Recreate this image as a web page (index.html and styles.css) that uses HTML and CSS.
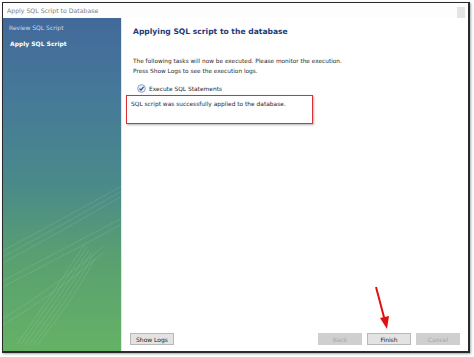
FILE: index.html
```html
<!DOCTYPE html>
<html lang="en">

<head>
  <meta charset="UTF-8">
  <meta name="viewport" content="width=device-width, initial-scale=1.0">
  <title>Apply SQL Script to Database</title>
  <link rel="stylesheet" href="styles.css">
</head>

<body>
  <div class="window">
    <div class="titlebar">
      <span class="title">Apply SQL Script to Database</span>
      <span class="title-box"></span>
    </div>
    <div class="body">
      <div class="sidebar">
        <div class="step">Review SQL Script</div>
        <div class="step active">Apply SQL Script</div>
        <svg class="swoosh" viewBox="0 0 118 332" preserveAspectRatio="none">
          <g fill="none" stroke="#ffffff" stroke-width="0.8" stroke-opacity="0.13">
            <path d="M0 232 Q60 200 118 168" />
            <path d="M0 238 Q60 206 118 173" />
            <path d="M0 244 Q60 212 118 178" />
            <path d="M0 262 Q70 225 118 200" />
            <path d="M0 268 Q70 232 118 206" />
            <path d="M0 300 Q60 262 100 228" />
            <path d="M0 306 Q60 270 100 234" />
            <path d="M14 325 Q50 275 82 225" />
            <path d="M18 325 Q54 276 84 228" />
            <path d="M22 325 Q58 277 86 231" />
            <path d="M26 326 Q62 278 88 234" />
            <path d="M30 326 Q66 280 90 237" />
            <path d="M34 326 Q70 282 92 240" />
          </g>
        </svg>
      </div>
      <div class="content">
        <h1 class="heading">Applying SQL script to the database</h1>
        <p class="intro">The following tasks will now be executed. Please monitor the execution.<br>Press Show Logs to see the execution logs.</p>
        <div class="task">
          <svg class="check" viewBox="0 0 10 10" width="9" height="9">
            <circle cx="5" cy="5" r="4.3" fill="#e8eef8" stroke="#6b86b8" stroke-width="0.8" />
            <path d="M2.8 5.1 L4.4 6.7 L7.3 3.2" fill="none" stroke="#27457e" stroke-width="1.3" />
          </svg>
          <span>Execute SQL Statements</span>
        </div>
        <div class="message">SQL script was successfully applied to the database.</div>
        <div class="buttons">
          <button class="btn">Show Logs</button>
          <div class="spacer"></div>
          <button class="btn disabled">Back</button>
          <button class="btn">Finish</button>
          <button class="btn disabled">Cancel</button>
        </div>
      </div>
    </div>
    <svg class="arrow" width="24" height="48" viewBox="0 0 24 48">
      <path d="M3 2 L12 36" stroke="#e01010" stroke-width="2" fill="none" />
      <path d="M7 33 L14 44 L16 31 Z" fill="#e01010" />
    </svg>
  </div>
</body>

</html>
```

FILE: styles.css
```css
* {
  margin: 0;
  padding: 0;
  box-sizing: border-box;
  font-family: 'DejaVu Sans', 'Liberation Sans', sans-serif;
}

body {
  width: 474px;
  height: 357px;
  background: #fff;
  overflow: hidden;
}

.window {
  position: relative;
  margin: 2px 0 0 2px;
  width: 468px;
  height: 351px;
  border: 1px solid #2a2a2a;
  border-right-width: 2px;
  border-bottom-width: 2px;
  box-shadow: 1px 1px 2px rgba(0, 0, 0, 0.35);
  display: flex;
  flex-direction: column;
  background: #fff;
}

.titlebar {
  height: 15px;
  display: flex;
  align-items: center;
  padding: 0 3px 0 4px;
  background: #fdfdfd;
}

.title {
  font-size: 6.2px;
  color: #7d7d7d;
}

.title-box {
  margin-left: auto;
  margin-top: 4px;
  width: 8px;
  height: 11px;
  background: #e4e4e4;
}

.body {
  flex: 1;
  display: flex;
}

.sidebar {
  position: relative;
  width: 118px;
  padding: 4px 0 0 6px;
  background: linear-gradient(180deg, #42699a 0%, #467a98 25%, #4a8a8a 50%, #58a070 72%, #65b266 100%);
  overflow: hidden;
}

.step {
  font-size: 6px;
  color: #c9dcee;
  height: 12px;
  line-height: 12px;
}

.step.active {
  margin-top: 4px;
  padding-left: 1px;
  color: #fff;
  font-weight: bold;
}

.swoosh {
  position: absolute;
  left: 0;
  top: 0;
  width: 118px;
  height: 100%;
}

.content {
  flex: 1;
  display: flex;
  flex-direction: column;
  padding: 9px 8px 6px 4px;
  border-left: 1px solid #dfe6ee;
}

.heading {
  font-size: 7.6px;
  font-weight: bold;
  color: #1e3c78;
  padding-left: 7px;
}

.intro {
  margin-top: 20px;
  padding-left: 7px;
  font-size: 5.8px;
  line-height: 10px;
  color: #2a2a2a;
}

.task {
  display: flex;
  align-items: center;
  gap: 3px;
  margin-top: 8px;
  padding-left: 11px;
  font-size: 5.9px;
  color: #2a2a2a;
}

.message {
  margin-top: 2px;
  width: 187px;
  height: 29px;
  padding: 5px 4px;
  border: 1.5px solid #d9303a;
  box-shadow: 1px 1px 2px rgba(0, 0, 0, 0.3);
  font-size: 5.9px;
  color: #2a2a2a;
}

.buttons {
  margin-top: auto;
  display: flex;
  gap: 5px;
  padding-left: 4px;
}

.spacer {
  flex: 1;
}

.btn {
  width: 44px;
  height: 12px;
  font-size: 6px;
  color: #222;
  background: #e3e3e3;
  border: 1px solid #b8b8b8;
}

.btn.disabled {
  color: #a8a8a8;
  background: #cfcfcf;
  border-color: #cfcfcf;
}

.arrow {
  position: absolute;
  left: 370px;
  top: 282px;
}
```
